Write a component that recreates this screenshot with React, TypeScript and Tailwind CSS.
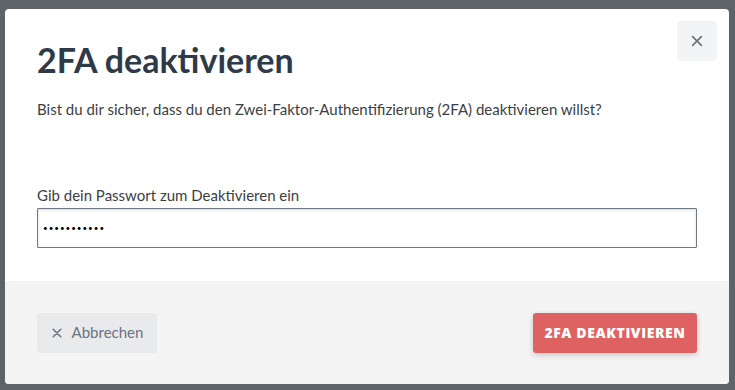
import React from "react";

function CloseIcon({ className }: { className?: string }) {
    return (
        <svg viewBox="0 0 16 16" className={className} fill="none" stroke="currentColor" strokeWidth={2} strokeLinecap="round">
            <path d="M3 3l10 10M13 3L3 13" />
        </svg>
    );
}

export default function App() {
    return (
        <div className="w-[735px] h-[390px] bg-[#5d6469] pt-[9px] pl-[5px] overflow-hidden font-['Lato',sans-serif]">
            <div className="w-[724px] h-[375px] bg-white rounded-[4px] flex flex-col overflow-hidden">
                {/* body */}
                <div className="h-[272px] pl-[32px] pr-[12px] pt-[12px] flex flex-col">
                    <div className="flex flex-row justify-between items-start">
                        <h1 className="mt-[19px] text-[34px] leading-[40px] font-bold text-[#2f3a48]">2FA deaktivieren</h1>
                        <button className="w-10 h-10 rounded-[4px] bg-[#f3f4f5] text-[#6b7280] flex items-center justify-center">
                            <CloseIcon className="w-[14px] h-[14px]" />
                        </button>
                    </div>
                    <p className="mt-[19px] text-[15px] leading-[20px] text-[#3b4046]">
                        Bist du dir sicher, dass du den Zwei-Faktor-Authentifizierung (2FA) deaktivieren willst?
                    </p>
                    <label className="mt-[66px] text-[15px] leading-[20px] text-[#3b4046]">Gib dein Passwort zum Deaktivieren ein</label>
                    <input
                        type="password"
                        defaultValue="geheim12345"
                        className="mt-[3px] w-[660px] h-[40px] border border-[#6f7780] rounded-[1px] px-[5px] text-[8px] tracking-[1px] text-black shadow-[inset_0_1px_3px_rgba(0,0,0,0.15)] outline-none"
                    />
                </div>
                {/* footer */}
                <div className="flex-1 bg-[#f4f4f4] pl-[32px] pr-[32px] flex flex-row items-center justify-between">
                    <button className="h-10 w-[120px] rounded-[3px] bg-[#e9eaec] text-[#6b7280] text-[15px] flex items-center justify-center gap-[9px]">
                        <CloseIcon className="w-[12px] h-[12px]" />
                        <span>Abbrechen</span>
                    </button>
                    <button className="h-10 w-[164px] rounded-[3px] bg-[#df6262] text-white text-[14px] font-extrabold tracking-[0.6px] shadow-[0_2px_6px_rgba(0,0,0,0.18)] font-['Open_Sans',sans-serif]">
                        2FA DEAKTIVIEREN
                    </button>
                </div>
            </div>
        </div>
    );
}
